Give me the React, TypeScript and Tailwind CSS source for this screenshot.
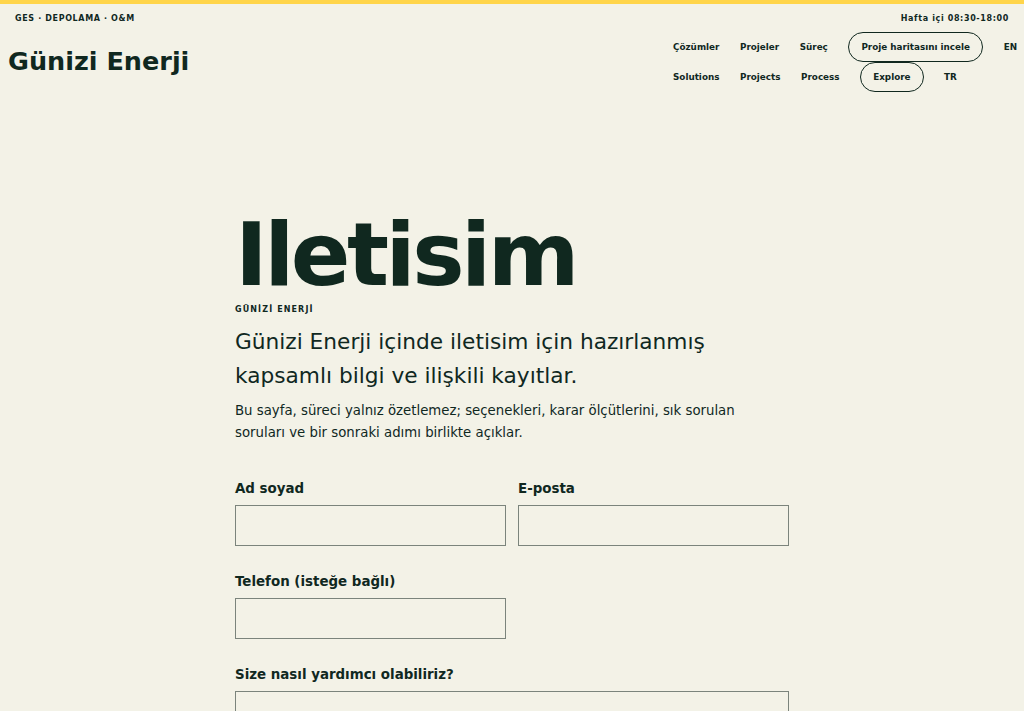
const font = { fontFamily: '"DejaVu Sans", Verdana, sans-serif' };

const navTr = ["Çözümler", "Projeler", "Süreç"];
const navEn = ["Solutions", "Projects", "Process"];

function NavRow({ items, cta, lang }: { items: string[]; cta: string; lang: string }) {
  return (
    <div className="flex h-[30px] items-center gap-[20.6px] text-[8.8px] font-bold">
      {items.map((t) => (
        <a key={t} href="#" className="leading-none">
          {t}
        </a>
      ))}
      <a
        href="#"
        className="flex h-[30px] items-center rounded-full border border-[#10281f] px-3 leading-none"
      >
        {cta}
      </a>
      <a href="#" className="leading-none">
        {lang}
      </a>
    </div>
  );
}

function Field({ label, className = "" }: { label: string; className?: string }) {
  return (
    <label className={`flex flex-col gap-1.5 ${className}`}>
      <span className="text-[13.4px] font-bold leading-5">{label}</span>
      <input
        type="text"
        className="h-[41px] w-full border border-[#7b847c] bg-transparent px-2 outline-none"
      />
    </label>
  );
}

export default function App() {
  return (
    <div className="min-h-screen bg-[#f3f2e7] text-[#10281f]" style={font}>
      <div className="h-1 bg-[#ffd54a]" />
      <header>
        <div className="flex h-[26px] items-center justify-between px-[15px] pt-1 text-[8px] font-bold tracking-[0.08em]">
          <span>GES · DEPOLAMA · O&amp;M</span>
          <span>Hafta içi 08:30-18:00</span>
        </div>
        <div className="flex items-center justify-between pl-2 pr-[6px] pt-[2px]">
          <a href="#" className="text-[25.5px] font-bold leading-none">
            Günizi Enerji
          </a>
          <nav className="flex w-[345px] flex-col">
            <NavRow items={navTr} cta="Proje haritasını incele" lang="EN" />
            <NavRow items={navEn} cta="Explore" lang="TR" />
          </nav>
        </div>
      </header>

      <main className="mx-auto w-[554px] pt-[119px]">
        <h1 className="text-[88px] font-bold leading-none tracking-[-0.04em]">Iletisim</h1>
        <p className="mt-[5px] text-[8px] font-bold leading-3 tracking-[0.14em]">GÜNİZİ ENERJİ</p>
        <p className="mt-[9px] text-[21.7px] leading-[34px]">
          Günizi Enerji içinde iletisim için hazırlanmış kapsamlı bilgi ve ilişkili kayıtlar.
        </p>
        <p className="mt-[7px] max-w-[520px] text-[13.3px] leading-[22px]">
          Bu sayfa, süreci yalnız özetlemez; seçenekleri, karar ölçütlerini, sık sorulan
          soruları ve bir sonraki adımı birlikte açıklar.
        </p>

        <form className="mt-[35px] grid grid-cols-2 gap-x-3 gap-y-[26px] pb-16">
          <Field label="Ad soyad" />
          <Field label="E-posta" />
          <Field label="Telefon (isteğe bağlı)" />
          <div />
          <label className="col-span-2 flex flex-col gap-1.5">
            <span className="text-[13.4px] font-bold leading-5">Size nasıl yardımcı olabiliriz?</span>
            <textarea className="h-[140px] w-full resize-none border border-[#7b847c] bg-transparent p-2 outline-none" />
          </label>
        </form>
      </main>
    </div>
  );
}
